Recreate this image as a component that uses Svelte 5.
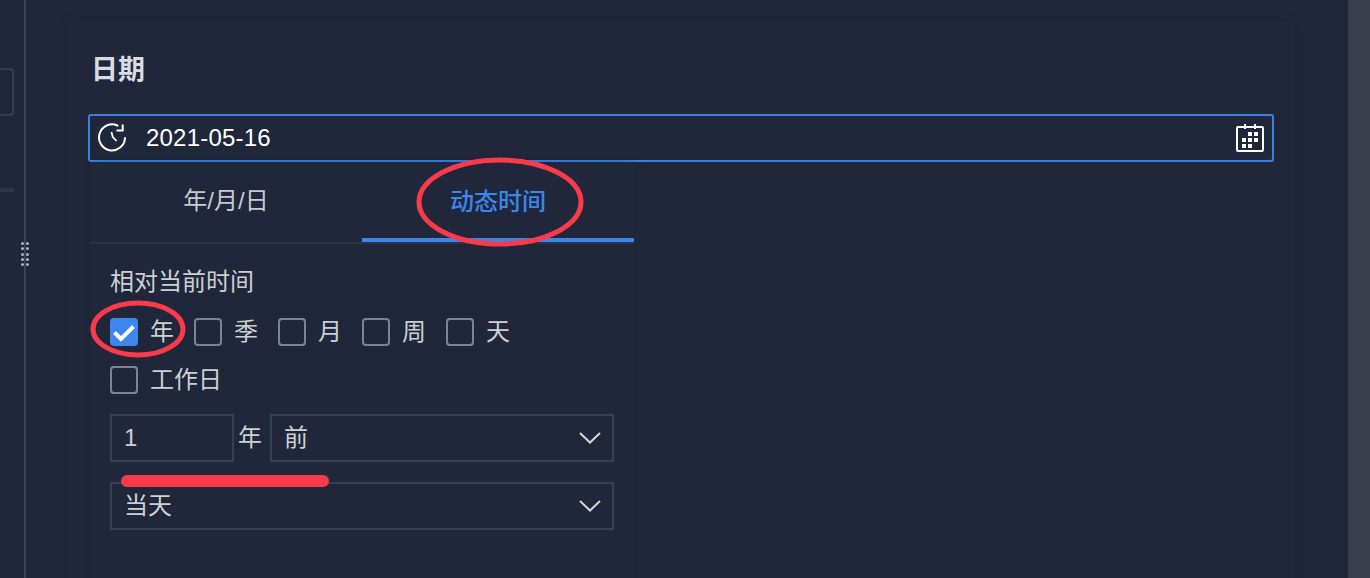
<script>
  const units = ['年', '季', '月', '周', '天'];
</script>

<div class="root">
  <aside class="rail">
    <div class="stub-box"></div>
    <div class="stub-line"></div>
    <div class="grip">
      {#each Array(10) as _}<i></i>{/each}
    </div>
  </aside>

  <main class="main">
    <section class="panel">
      <h2 class="title">日期</h2>

      <div class="date-input">
        <svg class="clock" viewBox="0 0 30 30" width="30" height="30" fill="none" stroke="#fff" stroke-width="2">
          <path d="M20.5 2.6A13 13 0 1 0 28 15" stroke-linecap="round" />
          <path d="M19.5 7.6h6.2V1.6" stroke-width="2" />
          <path d="M14.4 9l1.4 5 3.8 4" stroke-width="1.8" />
        </svg>
        <span class="date-text">2021-05-16</span>
        <svg class="cal" viewBox="0 0 28 28" width="28" height="28">
          <rect x="1" y="3" width="26" height="24" rx="1" fill="none" stroke="#fff" stroke-width="2" />
          <rect x="8" y="0" width="2" height="5" fill="#fff" />
          <rect x="18" y="0" width="2" height="5" fill="#fff" />
          <path fill="#fff" d="M12 8h4v4h-4zM18 8h4v4h-4zM6 14h4v4H6zM12 14h4v4h-4zM18 14h4v4h-4zM6 20h4v4H6zM12 20h4v4h-4z" />
        </svg>
      </div>

      <div class="drop">
        <div class="tabs">
          <div class="tab">年/月/日</div>
          <div class="tab active">动态时间</div>
        </div>
        <div class="body">
          <div class="heading">相对当前时间</div>
          <div class="checks">
            {#each units as u, i}
              <label class="check">
                <span class="box" class:on={i === 0}>
                  {#if i === 0}
                    <svg viewBox="0 0 28 28" width="28" height="28" fill="none" stroke="#fff" stroke-width="4">
                      <path d="M4.5 14.5l6.5 6.5L23.5 8.5" />
                    </svg>
                  {/if}
                </span>
                <span>{u}</span>
              </label>
            {/each}
          </div>
          <div class="checks">
            <label class="check">
              <span class="box"></span>
              <span>工作日</span>
            </label>
          </div>
          <div class="amount">
            <div class="field num">1</div>
            <span class="unit">年</span>
            <div class="field sel">
              <span>前</span>
              <svg viewBox="0 0 22 12" width="22" height="12" fill="none" stroke="#d3d7d6" stroke-width="2"><path d="M1 1l10 9.5L21 1" /></svg>
            </div>
          </div>
          <div class="field sel wide">
            <span>当天</span>
            <svg viewBox="0 0 22 12" width="22" height="12" fill="none" stroke="#d3d7d6" stroke-width="2"><path d="M1 1l10 9.5L21 1" /></svg>
          </div>
        </div>
      </div>
    </section>
  </main>

  <div class="scrollbar"></div>

  <svg class="marks" viewBox="0 0 1370 578" width="1370" height="578" fill="none" stroke="#f93a4b">
    <ellipse cx="500" cy="202" rx="81" ry="42" stroke-width="5" />
    <ellipse cx="138" cy="329" rx="45" ry="26" stroke-width="5" />
    <path d="M127 481H323" stroke-width="12" stroke-linecap="round" />
  </svg>
</div>

<style>
  :global(body) {
    margin: 0;
    background: #20273a;
  }
  .root {
    position: relative;
    display: flex;
    width: 1370px;
    height: 578px;
    overflow: hidden;
    background: #20273a;
    color: #ccd0d2;
    font-family: "Liberation Sans", "Noto Sans CJK SC", sans-serif;
    font-size: 24px;
    line-height: 36px;
  }
  .rail {
    position: relative;
    flex: none;
    box-sizing: border-box;
    width: 26px;
    padding-top: 68px;
    border-right: 2px solid #37425a;
  }
  .stub-box {
    box-sizing: border-box;
    width: 14px;
    height: 48px;
    border: 2px solid #333c50;
    border-left: 0;
    border-radius: 0 4px 4px 0;
  }
  .stub-line {
    width: 14px;
    height: 4px;
    margin-top: 72px;
    background: #2c3447;
  }
  .grip {
    position: absolute;
    left: 21px;
    top: 242px;
    display: grid;
    grid-template-columns: 3px 3px;
    gap: 2.25px 2px;
  }
  .grip i {
    width: 3px;
    height: 3px;
    border-radius: 50%;
    background: #aab2c0;
  }
  .main {
    flex: 1;
    min-width: 0;
    box-sizing: border-box;
    padding: 22px 53px 0 42px;
  }
  .panel {
    box-sizing: border-box;
    height: 620px;
    padding: 24px 21px 0 20px;
    background: #20273a;
    box-shadow: 0 0 14px rgba(0, 0, 0, 0.1);
  }
  .title {
    margin: 0 0 20px;
    padding-left: 3px;
    height: 48px;
    line-height: 48px;
    font-size: 27px;
    font-weight: 700;
    color: #d9dce3;
  }
  .date-input {
    display: flex;
    align-items: center;
    box-sizing: border-box;
    height: 48px;
    padding: 0 8px 0 7px;
    border: 2px solid #3a80e0;
    border-radius: 3px;
    color: #fff;
  }
  .clock {
    flex: none;
    margin-right: 19px;
  }
  .date-text {
    flex: 1;
    letter-spacing: 0.2px;
  }
  .drop {
    box-sizing: border-box;
    width: 544px;
    height: 500px;
    margin-left: 2px;
    background: #20273a;
    box-shadow: 0 0 8px rgba(0, 0, 0, 0.12);
  }
  .tabs {
    display: flex;
    border-bottom: 2px solid #2b3245;
  }
  .tab {
    flex: 1;
    box-sizing: border-box;
    height: 80px;
    line-height: 78px;
    text-align: center;
    color: #c6cad1;
  }
  .tab.active {
    border-bottom: 4px solid #3c86ea;
    line-height: 80px;
    color: #3c86ea;
    font-weight: 500;
  }
  .body {
    padding: 20px;
  }
  .heading {
    height: 36px;
    margin-bottom: 8px;
  }
  .checks {
    display: flex;
    gap: 20px;
    height: 48px;
    align-items: center;
  }
  .check {
    display: flex;
    align-items: center;
    gap: 12px;
  }
  .box {
    box-sizing: border-box;
    width: 28px;
    height: 28px;
    border: 2px solid #7d8496;
    border-radius: 4px;
  }
  .box.on {
    border: 0;
    background: #3c86ee;
  }
  .box svg {
    display: block;
  }
  .amount {
    display: flex;
    align-items: center;
    margin-top: 10px;
    margin-bottom: 20px;
  }
  .field {
    display: flex;
    align-items: center;
    justify-content: space-between;
    box-sizing: border-box;
    height: 48px;
    padding: 0 11px 0 12px;
    border: 2px solid #363f52;
  }
  .num {
    width: 124px;
  }
  .unit {
    width: 36px;
    padding-left: 4px;
    box-sizing: border-box;
  }
  .sel {
    flex: 1;
  }
  .wide {
    width: 504px;
  }
  .scrollbar {
    flex: none;
    width: 22px;
    background: #3b3e4b;
  }
  .marks {
    position: absolute;
    left: 0;
    top: 0;
    pointer-events: none;
  }
</style>
